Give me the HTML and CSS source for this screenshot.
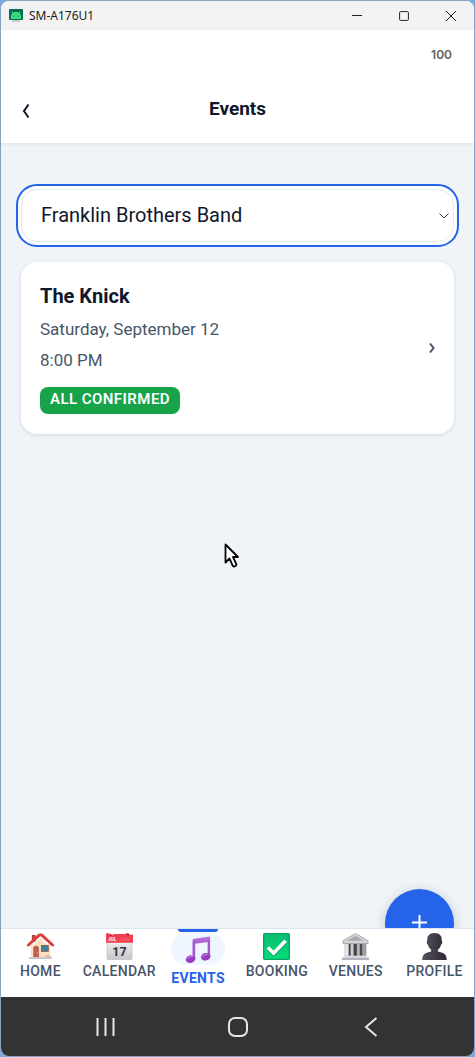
FILE: index.html
```
<!DOCTYPE html>
<html lang="en">
<head>
    <meta charset="utf-8">
    <meta name="viewport" content="width=device-width, initial-scale=1">
    <title>Events</title>
    <link rel="stylesheet" href="styles.css">
</head>
<body>
    <div class="window">
        <div class="title-bar">
            <svg class="app-icon" width="14" height="14" viewBox="0 0 14 14">
                <rect x="3" y="10" width="8" height="3" rx="1" fill="#c9cdcb"/>
                <rect width="14" height="11" rx="1" fill="#0b6b50"/>
                <path d="M2 10V7a5 4 0 0 1 10 0v3z" fill="#3ddc84"/>
                <path d="M3 2.500l1.500 2.500M11 2.500L9.500 5" stroke="#3ddc84"/>
                <circle cx="5" cy="7" r=".6" fill="#0b6b50"/>
                <circle cx="9" cy="7" r=".6" fill="#0b6b50"/>
            </svg>
            <span class="window-name">SM-A176U1</span>
            <div class="window-controls">
                <button aria-label="Minimize"><svg width="10" height="10" viewBox="0 0 10 10"><path d="M0 4.500h10"/></svg></button>
                <button aria-label="Maximize"><svg width="10" height="10" viewBox="0 0 10 10"><rect x=".6" y=".6" width="8.800" height="8.800" rx="1"/></svg></button>
                <button aria-label="Close"><svg width="10" height="10" viewBox="0 0 10 10"><path d="M0 0l10 10M10 0L0 10"/></svg></button>
            </div>
        </div>

        <header class="app-header">
            <div class="status-bar">100</div>
            <div class="header-row">
                <button class="back-button" aria-label="Back">
                    <svg width="8" height="14" viewBox="0 0 8 14"><path d="M6.500 .5L2 7l4.500 6.500"/></svg>
                </button>
                <h1>Events</h1>
            </div>
        </header>

        <main class="content">
            <div class="band-picker">
                <select class="band-select" aria-label="Band">
                    <option>Franklin Brothers Band</option>
                </select>
                <svg class="select-arrow" width="10" height="6" viewBox="0 0 10 6"><path d="M.5 .5L5 5 9.500 .5"/></svg>
            </div>

            <a class="event-card" href="#">
                <div class="event-info">
                    <h2>The Knick</h2>
                    <p>Saturday, September 12</p>
                    <p>8:00 PM</p>
                    <span class="status-badge">ALL CONFIRMED</span>
                </div>
                <svg class="card-arrow" width="6" height="10" viewBox="0 0 6 10"><path d="M1 .5L4.500 5 1 9.500"/></svg>
            </a>

            <button class="add-button" aria-label="Add event">
                <svg width="15" height="15" viewBox="0 0 15 15"><path d="M7.500 0v15M0 7.500h15"/></svg>
            </button>

            <svg class="cursor" width="16" height="26" viewBox="0 0 16 26">
                <path d="M1.500 1.500v18l4-4 3.200 7.200q1.500 1.800 3.300 0 .8-1-.1-2.400L9 14h5z" fill="#fff" stroke="#000" stroke-width="1.800" stroke-linejoin="round"/>
            </svg>
        </main>

        <nav class="tab-bar">
            <a class="tab" href="#">
                <svg class="tab-icon" viewBox="0 0 28 28">
                    <path d="M4 12h20v13H4z" fill="#fbdcbd"/>
                    <path d="M5 14l9-9 9 9v11H5z" fill="#fde0c4"/>
                    <path d="M5 2h4v7H5z" fill="#b8463f"/>
                    <path d="M1.500 12.500L13 2h2l11.500 10.500" fill="none" stroke="#dd3c3c" stroke-width="3" stroke-linejoin="round" stroke-linecap="round"/>
                    <path d="M7 25V15q2.500-3 5 0v10z" fill="#c4604d" stroke="#9b4739" stroke-width=".6"/>
                    <circle cx="11" cy="20" r=".6" fill="#ffd56b"/>
                    <rect x="15" y="13" width="7" height="6" fill="#2190ba" stroke="#895e4e"/>
                    <path d="M18.500 13v6M15 16h7" stroke="#895e4e" stroke-width=".6"/>
                    <path d="M2 25h24v2H2z" fill="#c7c3d0"/>
                    <path d="M18 25q3-4 6-1l2 1z" fill="#e4b093"/>
                </svg>
                <span>HOME</span>
            </a>
            <a class="tab" href="#">
                <svg class="tab-icon" viewBox="0 0 28 28">
                    <defs>
                        <linearGradient id="paper" x2="0" y2="1"><stop stop-color="#fafafa"/><stop offset="1" stop-color="#c5c5cd"/></linearGradient>
                    </defs>
                    <rect x="1" y="3" width="26" height="24.500" rx="1" fill="url(#paper)" stroke="#b9b9c2" stroke-width=".6"/>
                    <path d="M0 1q2-2 4 0t4 0h12q2-2 4 0t4 0v9H0z" fill="#f23d51"/>
                    <circle cx="5" cy="2" r="1" fill="#aa2939"/><circle cx="23" cy="2" r="1" fill="#aa2939"/>
                    <path d="M15 8l2-3 2 3 2-3 2 3 2-3" fill="none" stroke="#f9788a" stroke-width=".8"/>
                    <text class="calendar-month" x="2" y="8">JUL</text>
                    <text class="calendar-day" x="14" y="24" text-anchor="middle">17</text>
                </svg>
                <span>CALENDAR</span>
            </a>
            <a class="tab active" href="#" aria-current="page">
                <div class="tab-pill">
                    <svg class="tab-icon" viewBox="0 0 28 28">
                        <defs>
                            <linearGradient id="note" x2="0" y2="1"><stop stop-color="#bb72e3"/><stop offset="1" stop-color="#873bb7"/></linearGradient>
                        </defs>
                        <path d="M8 3L26 .5V6L10.500 8v16H8z" fill="url(#note)"/>
                        <path d="M23.500 4H26v18h-2.500zM8 5h2.500v18H8z" fill="#a45bd1"/>
                        <ellipse cx="5.800" cy="24" rx="5" ry="3.900" transform="rotate(-15 5.800 24)" fill="#943fc1"/>
                        <ellipse cx="21.500" cy="21.500" rx="5" ry="3.900" transform="rotate(-15 21.500 21.500)" fill="#943fc1"/>
                        <path d="M3 23q2-2 5-2M18 21q2-2 5-2" fill="none" stroke="#d092f2" stroke-linecap="round"/>
                    </svg>
                </div>
                <span>EVENTS</span>
            </a>
            <a class="tab" href="#">
                <svg class="tab-icon" viewBox="0 0 28 28">
                    <defs>
                        <linearGradient id="tick" x2="0" y2="1"><stop stop-color="#08bd72"/><stop offset="1" stop-color="#05de79"/></linearGradient>
                    </defs>
                    <rect x=".7" y=".7" width="26.600" height="26.600" rx="1" fill="url(#tick)" stroke="#08a261" stroke-width="1.400"/>
                    <path d="M5 15l6 6L23.500 8" fill="none" stroke="#098f58" stroke-width="3.800" transform="translate(0 1)"/>
                    <path d="M5 15l6 6L23.500 8" fill="none" stroke="#fff" stroke-width="3.800"/>
                </svg>
                <span>BOOKING</span>
            </a>
            <a class="tab" href="#">
                <svg class="tab-icon" viewBox="0 0 28 28">
                    <defs>
                        <linearGradient id="stone" x2="1" y2="0"><stop stop-color="#f0eff1"/><stop offset="1" stop-color="#9b999e"/></linearGradient>
                    </defs>
                    <rect x="4" y="11" width="20" height="13" fill="#454347"/>
                    <path d="M3 11h4v13H3zM9 11h3v13H9zM15.500 11h3v13h-3zM21 11h4v13h-4z" fill="url(#stone)" stroke="#8c8b90" stroke-width=".4"/>
                    <path d="M1 8L14 .5 27 8v3H1z" fill="#d5d4d7" stroke="#98979b" stroke-width=".8"/>
                    <path d="M5 8l9-5 9 5z" fill="#aaa8ad"/>
                    <path d="M2 23.500h24v2H2z" fill="#dddce0"/>
                    <path d="M0 25.500h28V28H0z" fill="#b7b2bf"/>
                </svg>
                <span>VENUES</span>
            </a>
            <a class="tab" href="#">
                <svg class="tab-icon" viewBox="0 0 28 28">
                    <defs>
                        <linearGradient id="person"><stop stop-color="#57515f"/><stop offset="1" stop-color="#2d2834"/></linearGradient>
                    </defs>
                    <path d="M14 0C8.500 0 6 3.500 6.500 8c-1 .5-.8 3.500.8 4.200.5 2.500 1.700 4.200 3.200 5.100v2C5 20.500 1.500 21.500 1.300 28h25.400c-.2-6.500-3.700-7.500-9.200-8.700v-2c1.500-.9 2.700-2.600 3.200-5.100 1.600-.7 1.800-3.700.8-4.200C22 3.500 19.500 0 14 0z" fill="url(#person)"/>
                </svg>
                <span>PROFILE</span>
            </a>
        </nav>

        <div class="system-bar">
            <button aria-label="Recent apps"><svg width="20" height="20" viewBox="0 0 20 20"><path d="M2.500 1v18M10.500 1v18M18.500 1v18"/></svg></button>
            <button aria-label="Home"><svg width="20" height="20" viewBox="0 0 20 20"><rect x="1" y="1" width="18" height="18" rx="6"/></svg></button>
            <button aria-label="Back"><svg width="20" height="20" viewBox="0 0 20 20"><path d="M15.500 1L5 10l10.500 9"/></svg></button>
        </div>
    </div>
</body>
</html>
```
FILE: styles.css
```
* {
    margin: 0;
    padding: 0;
    box-sizing: border-box;
}

body {
    background-color: #79a9de;
    font-family: Roboto, 'Liberation Sans', sans-serif;
    color: #0f172a;
}

button {
    background: none;
    border: none;
    cursor: pointer;
}

a {
    color: inherit;
    text-decoration: none;
}

svg {
    display: block;
    fill: none;
}

.window {
    min-height: 100vh;
    display: flex;
    flex-direction: column;
    border: 1px solid #86a3c3;
    border-radius: 9px;
    overflow: hidden;
    background-color: #f0f4f9;
}

/* Window title bar */
.title-bar {
    height: 29px;
    display: flex;
    align-items: center;
    padding-left: 8px;
    background-color: #f3f3f3;
}

.window-name {
    flex: 1;
    margin-left: 6px;
    font-family: 'Noto Sans', sans-serif;
    font-size: 12px;
    color: #1b1b1b;
}

.window-controls {
    display: flex;
}

.window-controls button {
    width: 47px;
    height: 29px;
    display: flex;
    align-items: center;
    justify-content: center;
}

.window-controls svg {
    stroke: #222;
}

/* App header */
.app-header {
    background-color: #fff;
    box-shadow: 0 1px 4px rgba(15, 23, 42, 0.08);
}

.status-bar {
    padding: 16px 22px 0;
    font-family: Inter, sans-serif;
    font-size: 12px;
    line-height: 18px;
    font-weight: 600;
    color: #606060;
    text-align: right;
}

.header-row {
    position: relative;
    display: flex;
    align-items: center;
    justify-content: center;
    padding: 32px 0 22px;
}

.header-row h1 {
    font-size: 19px;
    line-height: 25px;
    font-weight: 700;
}

.back-button {
    position: absolute;
    left: 13px;
    top: 32px;
    padding: 8px;
}

.back-button svg {
    stroke: #0f172a;
    stroke-width: 2;
}

/* Event list */
.content {
    position: relative;
    flex: 1;
    padding: 46px 20px 20px;
    overflow: hidden;
}

.band-picker {
    position: relative;
    margin-bottom: 20px;
}

.band-select {
    display: block;
    width: 100%;
    height: 53px;
    padding: 0 19px 2px;
    appearance: none;
    background-color: #fff;
    border: 1px solid #e2e8f0;
    border-radius: 16px;
    outline: 2px solid #2563eb;
    outline-offset: 3px;
    box-shadow: 0 0 0 3px #fff;
    font-family: inherit;
    font-size: 20px;
    color: #0f172a;
}

.select-arrow {
    position: absolute;
    right: 5px;
    top: 24px;
    stroke: #28334a;
    pointer-events: none;
}

.event-card {
    display: flex;
    align-items: center;
    justify-content: space-between;
    padding: 20px 19px;
    background-color: #fff;
    border-radius: 16px;
    box-shadow: 0 1px 4px rgba(15, 23, 42, 0.12);
}

.event-info h2 {
    margin-bottom: 5px;
    font-size: 20px;
    line-height: 29px;
    font-weight: 700;
}

.event-info p {
    margin-bottom: 4px;
    font-size: 17px;
    line-height: 27px;
    color: #475569;
}

.status-badge {
    display: block;
    width: fit-content;
    margin-top: 13px;
    padding: 0 10px 2px;
    background-color: #16a34a;
    border-radius: 8px;
    font-size: 15px;
    line-height: 25px;
    font-weight: 600;
    letter-spacing: 0.03em;
    color: #fff;
}

.card-arrow {
    stroke: #475569;
    stroke-width: 2;
}

/* Floating button, tucked behind the tab bar */
.add-button {
    position: absolute;
    right: 20px;
    bottom: -30px;
    width: 69px;
    height: 69px;
    display: flex;
    align-items: center;
    justify-content: center;
    padding-bottom: 2px;
    background-color: #2563eb;
    border-radius: 50%;
    box-shadow: 0 2px 12px rgba(15, 23, 42, 0.2);
}

.add-button svg {
    stroke: #fff;
    stroke-width: 2;
}

.cursor {
    position: absolute;
    left: 223px;
    top: 400px;
    pointer-events: none;
}

/* Tab bar */
.tab-bar {
    height: 69px;
    display: flex;
    background-color: #fff;
    border-top: 1px solid #dce5f2;
}

.tab {
    position: relative;
    flex: 1 1 0;
    display: flex;
    flex-direction: column;
    align-items: center;
    padding-top: 4px;
    font-size: 14px;
    line-height: 20px;
    font-weight: 500;
    letter-spacing: 0.02em;
    color: #475569;
}

.tab-icon {
    width: 27px;
    height: 27px;
    margin-bottom: 1px;
}

.tab-pill {
    width: 54px;
    height: 32px;
    display: flex;
    align-items: center;
    justify-content: center;
    margin-bottom: 3px;
    background-color: #eff6ff;
    border-radius: 16px;
}

.tab-pill .tab-icon {
    margin-bottom: 0;
}

.tab.active {
    font-weight: 700;
    color: #2563eb;
}

.tab.active::before {
    content: '';
    position: absolute;
    top: 0;
    width: 40px;
    height: 3px;
    background-color: #2563eb;
    border-radius: 0 0 3px 3px;
}

.calendar-month {
    font-size: 5px;
    font-weight: 700;
    letter-spacing: 0;
    fill: #fff;
}

.calendar-day {
    font-size: 13px;
    font-weight: 700;
    letter-spacing: 0;
    fill: #343438;
}

/* Android navigation buttons */
.system-bar {
    height: 59px;
    display: flex;
    align-items: center;
    justify-content: center;
    gap: 73px;
    background-color: #333;
}

.system-bar button {
    width: 60px;
    height: 48px;
    display: flex;
    align-items: center;
    justify-content: center;
}

.system-bar svg {
    stroke: #e6e6e6;
    stroke-width: 2;
}
```
